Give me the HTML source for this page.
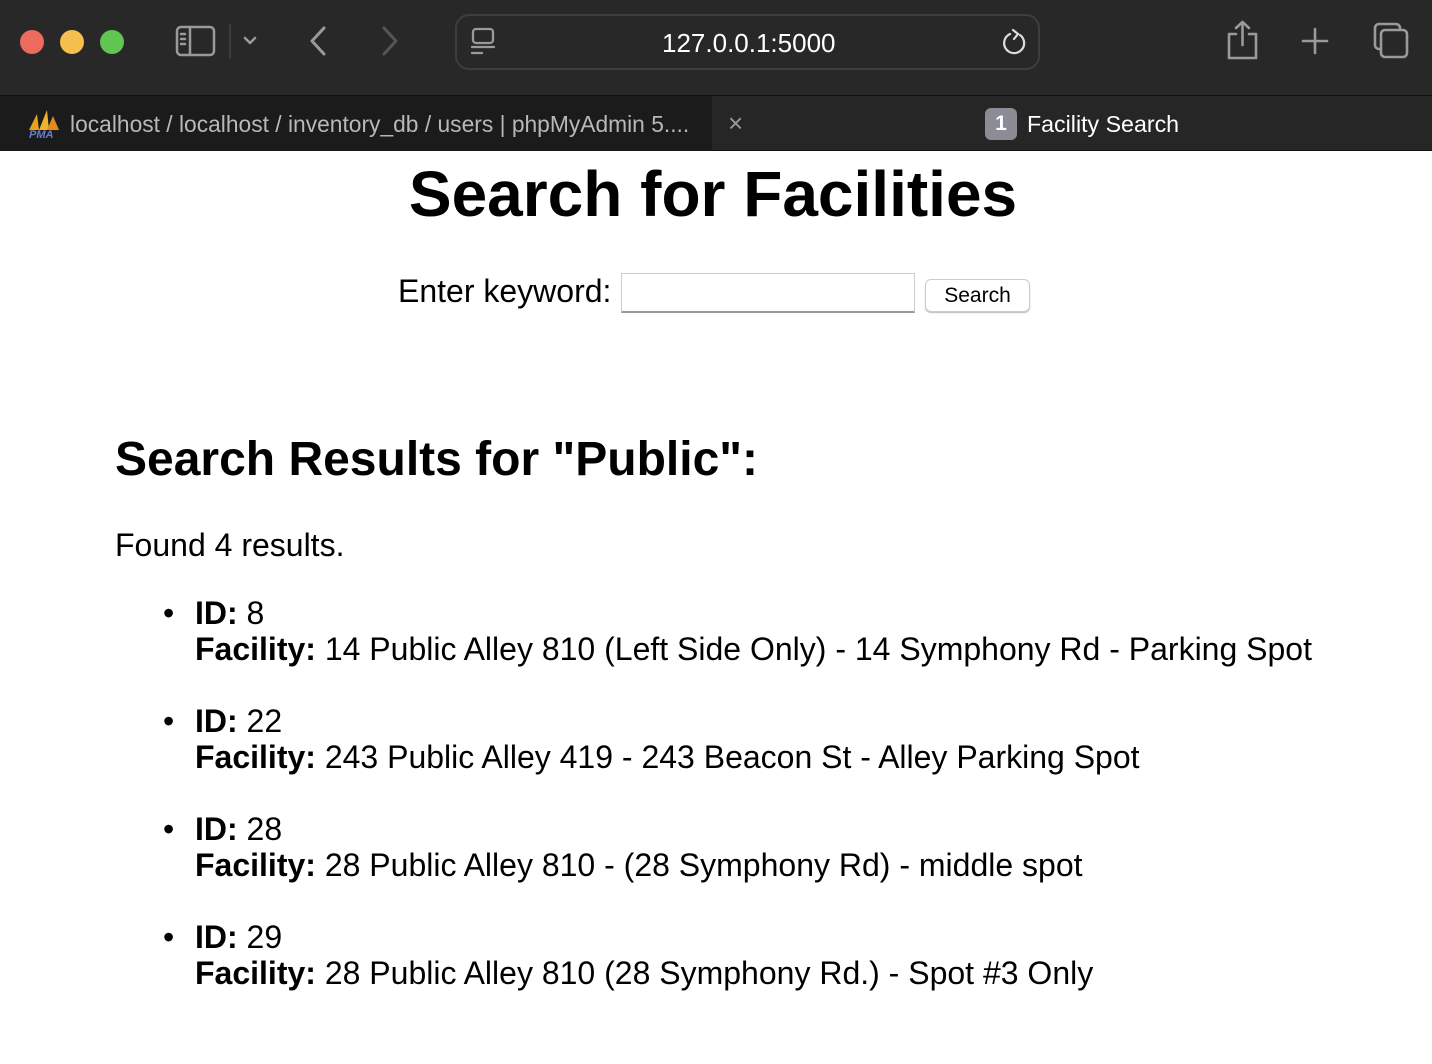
<!DOCTYPE html>
<html><head><style>
*{margin:0;padding:0;box-sizing:border-box}
body{width:1432px;height:1064px;background:#fff;font-family:"Liberation Sans",Arial,sans-serif;position:relative;overflow:hidden}
.top{position:absolute;left:0;top:0;width:1432px;height:95px;background:#282828}
.tabs{position:absolute;left:0;top:95px;width:1432px;height:56px;background:#262626;border-top:1px solid #111;border-bottom:1px solid #111}
.tab1{position:absolute;left:0;top:0;width:712px;height:55px;background:#1b1b1b}
.dot{position:absolute;top:30px;width:24px;height:24px;border-radius:50%}
.t{position:absolute;white-space:nowrap}
</style></head><body>
<div class="top">
<div class="dot" style="left:20px;background:#ec6a5e"></div>
<div class="dot" style="left:60px;background:#f4bf4f"></div>
<div class="dot" style="left:100px;background:#61c554"></div>
<svg style="position:absolute;left:170px;top:22px" width="100" height="40" fill="none" stroke="#9a9a9a" stroke-width="2.5" stroke-linecap="round" stroke-linejoin="round">
<rect x="7" y="5" width="37" height="28" rx="4"/><line x1="20" y1="5" x2="20" y2="33"/><line x1="11" y1="12" x2="15" y2="12"/><line x1="11" y1="17" x2="15" y2="17"/><line x1="11" y1="22" x2="15" y2="22"/>
<line x1="60" y1="2" x2="60" y2="36" stroke="#444" stroke-width="1.5"/>
<polyline points="75,16 80,21 85,16"/></svg>
<svg style="position:absolute;left:300px;top:22px" width="110" height="40" fill="none" stroke-width="3" stroke-linecap="round" stroke-linejoin="round">
<polyline points="24,6 12,19 24,32" stroke="#9a9a9a"/><polyline points="84,6 96,19 84,32" stroke="#555"/></svg>
<div style="position:absolute;left:455px;top:14px;width:585px;height:56px;border:2px solid #3e3e3e;border-radius:14px"></div>
<svg style="position:absolute;left:466px;top:26px" width="34" height="32" fill="none" stroke="#9a9a9a" stroke-width="2.3" stroke-linecap="round"><rect x="7" y="3" width="20" height="14" rx="3"/><line x1="6" y1="21" x2="28" y2="21"/><line x1="6" y1="27" x2="16" y2="27"/></svg>
<div class="t" style="left:662px;top:28px;color:#fff;font-size:26px">127.0.0.1:5000</div>
<svg style="position:absolute;left:998px;top:26px" width="34" height="34" fill="none" stroke="#ddd" stroke-width="2.2" stroke-linecap="round"><path d="M22 9 A10 10 0 1 1 12 8"/><polyline points="15,4 20,8 16,13"/></svg>
<svg style="position:absolute;left:1220px;top:16px" width="200" height="50" fill="none" stroke="#9a9a9a" stroke-width="2.6" stroke-linecap="round" stroke-linejoin="round">
<path d="M16 18 H9 V42 H36 V18 H29"/><line x1="22.5" y1="6" x2="22.5" y2="29"/><polyline points="16,12 22.5,6 29,12"/>
<line x1="95" y1="13" x2="95" y2="37"/><line x1="83" y1="25" x2="107" y2="25"/>
<rect x="155" y="8" width="25" height="25" rx="4"/><rect x="161" y="14" width="26" height="27" rx="4" fill="#282828"/></svg>
</div>
<div class="tabs"><div class="tab1"></div>
<svg style="position:absolute;left:27px;top:12px" width="36" height="32"><path d="M2 22 L10 6 L12 22Z" fill="#e8a21e"/><path d="M12 22 L20 2 L22 22Z" fill="#f0b030"/><path d="M20 22 L26 8 L32 22Z" fill="#e48a1a"/><text x="2" y="30" font-size="11" font-style="italic" font-weight="bold" fill="#6a7ccf" font-family="Liberation Sans">PMA</text></svg>
<div class="t" style="left:70px;top:15px;color:#b8b8b8;font-size:22.8px">localhost / localhost / inventory_db / users | phpMyAdmin 5....</div>
<div class="t" style="left:728px;top:12px;color:#999;font-size:26px">×</div>
<div style="position:absolute;left:985px;top:12px;width:32px;height:32px;border-radius:6px;background:#8c8c96;color:#fff;font-size:21px;text-align:center;line-height:32px;font-weight:bold">1</div>
<div class="t" style="left:1027px;top:15px;color:#fff;font-size:23.2px">Facility Search</div>
</div>

<div class="t" style="left:0;width:1426px;text-align:center;top:157px;font-size:64px;font-weight:bold;color:#000">Search for Facilities</div>
<div class="t" style="left:398px;top:273px;font-size:32px">Enter keyword:</div>
<div style="position:absolute;left:621px;top:273px;width:294px;height:40px;border:1px solid #ccc;border-bottom:2px solid #999"></div>
<div style="position:absolute;left:925px;top:279px;width:105px;height:33px;border:1px solid #ccc;border-radius:6px;background:#fff;box-shadow:0 1px 1px #bbb;font-size:21px;text-align:center;line-height:31px">Search</div>
<div class="t" style="left:115px;top:432px;font-size:48px;font-weight:bold">Search Results for "Public":</div>
<div class="t" style="left:115px;top:527px;font-size:32px">Found 4 results.</div>
<div style="position:absolute;left:195px;top:595px;font-size:32px;line-height:36px">
<div style="position:relative;margin-bottom:36px"><span style="position:absolute;left:-32px">•</span><b>ID:</b> 8<br><b>Facility:</b> 14 Public Alley 810 (Left Side Only) - 14 Symphony Rd - Parking Spot</div>
<div style="position:relative;margin-bottom:36px"><span style="position:absolute;left:-32px">•</span><b>ID:</b> 22<br><b>Facility:</b> 243 Public Alley 419 - 243 Beacon St - Alley Parking Spot</div>
<div style="position:relative;margin-bottom:36px"><span style="position:absolute;left:-32px">•</span><b>ID:</b> 28<br><b>Facility:</b> 28 Public Alley 810 - (28 Symphony Rd) - middle spot</div>
<div style="position:relative"><span style="position:absolute;left:-32px">•</span><b>ID:</b> 29<br><b>Facility:</b> 28 Public Alley 810 (28 Symphony Rd.) - Spot #3 Only</div>
</div>
</body></html>
